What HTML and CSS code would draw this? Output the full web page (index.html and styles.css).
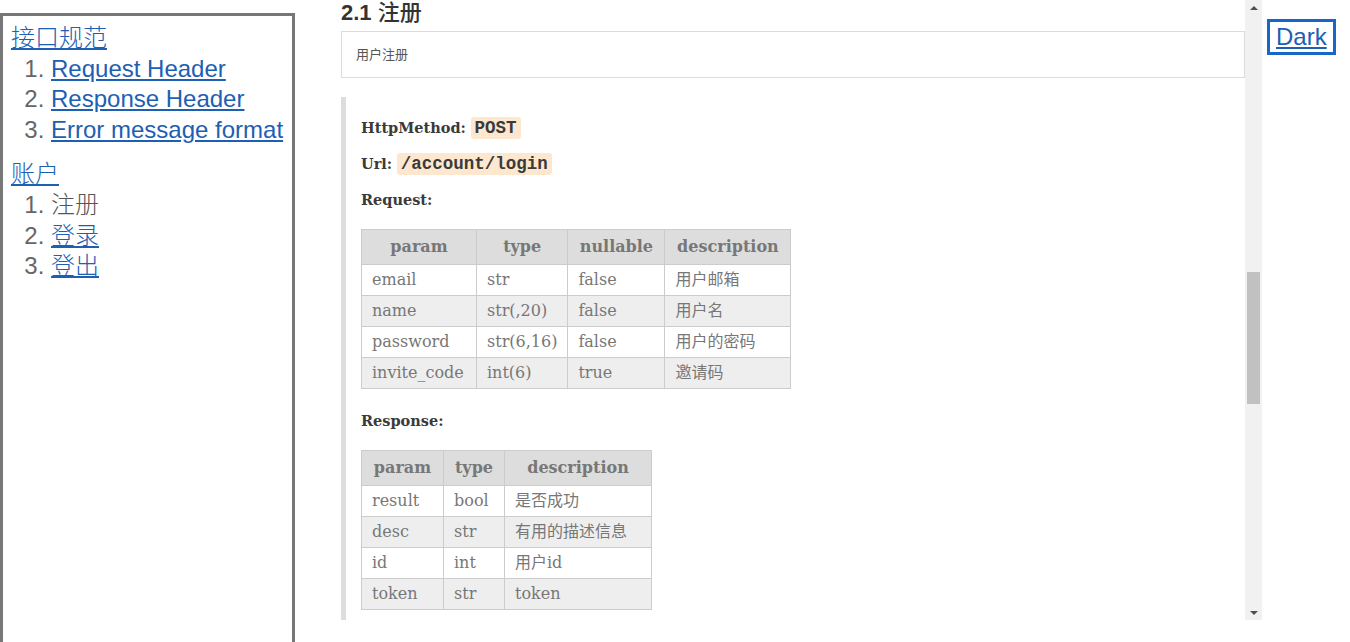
FILE: index.html
```html
<!DOCTYPE html>
<html lang="zh">
<head>
<meta charset="utf-8">
<title>API</title>
<link rel="stylesheet" href="styles.css">
</head>
<body>
<div class="page">
  <nav class="toc">
    <a class="toc-title" href="#spec">接口规范</a>
    <ol class="toc-list">
      <li><a href="#req">Request Header</a></li>
      <li><a href="#resp">Response Header</a></li>
      <li><a href="#err">Error message format</a></li>
    </ol>
    <a class="toc-title" href="#account">账户</a>
    <ol class="toc-list">
      <li><span class="current">注册</span></li>
      <li><a href="#login">登录</a></li>
      <li><a href="#logout">登出</a></li>
    </ol>
  </nav>

  <div class="frame">
    <main class="content">
      <h2 class="sec-title">2.1 <span class="sec-name">注册</span></h2>
      <div class="summary">用户注册</div>
      <blockquote class="detail">
        <p><b>HttpMethod:</b> <code>POST</code></p>
        <p><b>Url:</b> <code>/account/login</code></p>
        <p><b>Request:</b></p>
        <table class="grid">
          <colgroup><col class="w115"><col class="w89"><col class="w97"><col class="w127"></colgroup>
          <thead><tr><th>param</th><th>type</th><th>nullable</th><th>description</th></tr></thead>
          <tbody>
            <tr><td>email</td><td>str</td><td>false</td><td>用户邮箱</td></tr>
            <tr><td>name</td><td>str(,20)</td><td>false</td><td>用户名</td></tr>
            <tr><td>password</td><td>str(6,16)</td><td>false</td><td>用户的密码</td></tr>
            <tr><td>invite_code</td><td>int(6)</td><td>true</td><td>邀请码</td></tr>
          </tbody>
        </table>
        <p><b>Response:</b></p>
        <table class="grid">
          <colgroup><col class="w82"><col class="w61"><col class="w147"></colgroup>
          <thead><tr><th>param</th><th>type</th><th>description</th></tr></thead>
          <tbody>
            <tr><td>result</td><td>bool</td><td>是否成功</td></tr>
            <tr><td>desc</td><td>str</td><td>有用的描述信息</td></tr>
            <tr><td>id</td><td>int</td><td>用户id</td></tr>
            <tr><td>token</td><td>str</td><td>token</td></tr>
          </tbody>
        </table>
      </blockquote>
    </main>
    <div class="scrollbar">
      <div class="arrow up"></div>
      <div class="track"><div class="thumb"></div></div>
      <div class="arrow down"></div>
    </div>
  </div>

  <div class="theme">
    <a class="theme-btn" href="#dark">Dark</a>
  </div>
</div>
</body>
</html>
```

FILE: styles.css
```css
html, body {
  margin: 0;
  padding: 0;
  background: #fff;
  overflow: hidden;
  height: 642px;
}

.page {
  display: flex;
  align-items: flex-start;
  width: 1350px;
}

/* Sidebar */
.toc {
  box-sizing: border-box;
  width: 295px;
  height: 660px;
  margin-top: 13px;
  border: 3px solid #777;
  padding: 7px 8px 0;
  font-family: "Liberation Sans", Arial, "Noto Sans CJK SC", sans-serif;
  font-size: 24px;
  font-weight: 300;
  line-height: 30.6px;
  flex-shrink: 0;
}
.toc a {
  color: #1d60b3;
  text-decoration: underline;
}
.toc-title {
  display: block;
  width: max-content;
}
.toc-list {
  margin: 0 0 14px;
  padding-left: 40px;
  color: #666;
}
.toc-list li::marker {
  color: #666;
}
.current {
  color: #555;
}

/* Main frame */
.frame {
  display: flex;
  margin-left: 46px;
  width: 921px;
  height: 620px;
  flex-shrink: 0;
}
.content {
  flex: 1;
  overflow: hidden;
  font-family: "Liberation Sans", Arial, "Noto Sans CJK SC", sans-serif;
}
.sec-title {
  margin: 0 0 5px;
  font-size: 22px;
  line-height: 26px;
  color: #333;
  font-weight: bold;
}
.sec-name {
  font-weight: 500;
}
.summary {
  border: 1px solid #dcdcdc;
  padding: 14px;
  font-size: 13px;
  line-height: 17px;
  color: #555;
}
.detail {
  margin: 19px 0 0;
  border-left: 5px solid #ddd;
  padding: 5px 0 60px 15px;
  font-family: "DejaVu Serif", Georgia, "Noto Sans CJK SC", serif;
  color: #333;
}
.detail p {
  margin: 16px 0;
  font-size: 14.5px;
  line-height: 20px;
}
.detail b {
  color: #3a3a3a;
}
code {
  font-family: "Liberation Mono", "Courier New", monospace;
  font-weight: bold;
  font-size: 17.5px;
  background: #fde8cf;
  color: #3a3a3a;
  border-radius: 3px;
  padding: 1px 4px;
}

.grid {
  border-collapse: collapse;
  table-layout: fixed;
  margin: 19px 0 22px;
  font-size: 16px;
  color: #777;
  border: 1px solid #ccc;
}
.grid th, .grid td {
  border: 1px solid #ccc;
  padding: 6px 10px;
  line-height: 18px;
  white-space: nowrap;
  text-align: left;
}
.grid th {
  background: #ddd;
  color: #777;
  font-weight: bold;
  text-align: center;
  padding: 8px 6px;
}
.grid tbody tr:nth-child(even) td {
  background: #eee;
}
.w115 { width: 115px; }
.w89 { width: 87px; }
.w97 { width: 97px; }
.w127 { width: 126px; }
.w82 { width: 82px; }
.w61 { width: 61px; }
.w147 { width: 147px; }

/* Scrollbar */
.scrollbar {
  width: 17px;
  background: #f1f1f1;
  display: flex;
  flex-direction: column;
  flex-shrink: 0;
}
.arrow {
  height: 17px;
  display: flex;
  align-items: center;
  justify-content: center;
}
.arrow::before {
  content: "";
  width: 0;
  height: 0;
  border-left: 4px solid transparent;
  border-right: 4px solid transparent;
}
.arrow.up::before {
  border-bottom: 4px solid #505050;
  margin-bottom: 2px;
}
.arrow.down::before {
  border-top: 4px solid #505050;
  margin-top: 2px;
}
.track {
  flex: 1;
  padding-top: 255px;
}
.thumb {
  margin: 0 2px;
  height: 132px;
  background: #c1c1c1;
}

/* Theme toggle */
.theme {
  margin-left: 5px;
  margin-top: 19px;
}
.theme-btn {
  display: block;
  border: 3px solid #1766c8;
  padding: 0 6px;
  font-family: "Liberation Sans", Arial, sans-serif;
  font-size: 24px;
  line-height: 30px;
  color: #1d60b3;
  text-decoration: underline;
}
```
